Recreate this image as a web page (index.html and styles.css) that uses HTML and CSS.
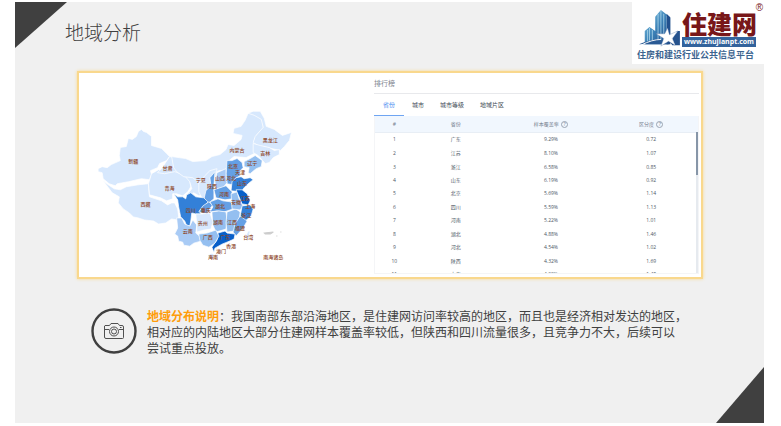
FILE: index.html
```html
<!DOCTYPE html>
<html lang="zh-CN">
<head>
<meta charset="utf-8">
<title>地域分析</title>
<link rel="stylesheet" href="styles.css">
</head>
<body>
<main class="slide">
  <header class="top">
    <h1>地域分析</h1>
    <div class="logo">
      <div class="logo-main">
        <svg class="logo-mark" viewBox="0 0 44 40" aria-hidden="true">
          <defs>
            <linearGradient id="tower" x1="0" y1="0" x2="1" y2="1">
              <stop offset="0" stop-color="#8fd0ea"/><stop offset="0.5" stop-color="#3d83b8"/><stop offset="1" stop-color="#1b4482"/>
            </linearGradient>
          </defs>
          <path d="M7 36V22l5-4 6 4v14zM18 36V7l6-7 9 7v29z" fill="url(#tower)"/>
          <path d="M24 0v36M21 4v32M27 4v32M30 6v30M12 19v17M10 21v15M15 21v15" stroke="#c5e8f5" stroke-width=".7" fill="none"/>
          <path d="M34 8v28h-4V4z" fill="#22508d"/>
          <path d="M1 36q15-6 23-5l8 5z" fill="#2a5a94"/>
          <path d="M3 37q12-6 21-6" stroke="#fff" fill="none"/>
          <path d="M41 22l-5 8 3 7-6-4 3 4h8V22z" fill="#25528d"/>
          <path d="M31 19l2 7 9-4-6 8 3 7-7-4-8 5 3-8-8-5h9z" fill="#fff" stroke="#5f7fae" stroke-width=".4"/>
        </svg>
        <div class="logo-words">
          <span class="logo-name">住建网</span>
          <span class="logo-url">www.zhujianpt.com</span>
        </div>
        <span class="logo-reg">®</span>
      </div>
      <div class="logo-tag">住房和建设行业公共信息平台</div>
    </div>
  </header>

  <section class="panel">
    <svg class="map" viewBox="80 74 292 202" role="img" aria-label="地域分布">
      <g class="land">
        <path class="c0" d="M99 169l4-2 5 1 4-3 9-4-1-5 1-8 6-1 2-8 4 1 4-3 2-5 3-2 2 2 3 1 5 4v9l10 3 5 5 3 3-3 4-7 3-2 4-7 3 1 4-2 5-8-1-13 3-11 2-2 2-6-2-6-5-1-6-4-1z"/>
        <path class="c0" d="M104 181l5 4 6 4 6 1 6-3 12-2 10-1 1 13 12 4 6 4 4-2 3 0 3 6 1 8-1 3-6-1-6 4-7 1-5-3-9-1-6-2-5-1-4-4-6-4-5-6 1-6-7-4z"/>
        <path class="c0" d="M152 174l7-4 6 1 5 1 4-2 7 1 5 4 4 6 1 6-3 5-5 4-6-2-4 0 0 5-6 2-6-3-11-3-1-11z"/>
        <path class="c0" d="M170 157l4 1 1 5 7 2 1 5 7 1 4 6 4 2 1 5 4 3 2 8-6 1-5-3-4 3-3-1 5-6-2-7-6-7-9-3-10 2-7-1 4-4z"/>
        <path class="c0" d="M172 157l14 2 7 3 13-1 6-4 8-2 6-5 2-5 6 1 7-6 1-4-9-2 1-5 7-2 4-6 3-7 5-1 8 4 2 5 0 7-6 6-3 6 4 7-4 6-8 4-12-1-5 4-2 10-8 0-6 4-4 9-7 2-4-4-5-4-9-1-7-5-3-4z"/>
        <path class="c0" d="M205 176l5-5 7-2-1 8-5 5-2 12-6 6-4-8 0-8z"/>
        <path class="c0" d="M248 114l5-2h7l4 7 2 8 8 3 8 6 9-3-2 8-5 6-4 4-9-2-8-2-4 0-6-4 2-6 8-9-2-8-7-4z"/>
        <path class="c0" d="M253 144l7 2 9 2 5 3 5-1 0 5-6 3-4 5-4 1-7-8-5-3z"/>
        <path class="c2" d="M244 162l6-3 5-3 7 5-1 6-5 2-6 5-2-1 1-5-5-1z"/>
        <path class="c3" d="M227 161l5 0 5-2 5 4 1 5-3 3 0 5-5 3-2 6-6-1-1-10z"/>
        <path class="c4" d="M232 182l4-4 5-1 3 2 6-1 3 2-5 4-4 4-3 4-10-1z"/>
        <path class="c1" d="M217 173l9-4 0 8 1 6-4 5-7 1-1-7z"/>
        <path class="c3" d="M210 178l5-6-1 14 0 13-5 4-6 1 3-13 5-5z"/>
        <path class="c3" d="M214 190l12-4 6 6 0 7-7 1-9-2z"/>
        <path class="c4" d="M174 194l4 3 5 0 3 2 1-4 4-2 5 4 8 1 4 4-4 6-4 2 1 4-5 0-4-1-1 8-1 5-3 0-2-5-4-4-2-10-1-7z"/>
        <path class="c1" d="M177 218l5 0 3 6 5 2 3-6 4 5-1 8 5 4 0 4-7 2-4 3-6-1-1-3-4-1-1-5-3-2 3-6z"/>
        <path class="c3" d="M203 206l6-4 4 3-4 5-2 4-8-2z"/>
        <path class="c0" d="M196 214l6 0 8-1 3 9-2 7-7 1-7 2 0-8z"/>
        <path class="c3" d="M210 202l8-3 5 2 8 1 2 7-9 3-7-1-7 1 3-5z"/>
        <path class="c2" d="M212 212l7-1 7 1 1 8-1 9-10 3-3-7z"/>
        <path class="c2" d="M227 212l9-3 4 3-1 9-5 10-7 1-1-9z"/>
        <path class="c2" d="M231 194l6-2 2 7 4 7-3 4-8-1z"/>
        <path class="c5" d="M236 190l6 0 5 4 3 7-2 4-6-1-3-7z"/>
        <path class="c4" d="M242 206l8-1 3 4-2 7-6 5-5-4z"/>
        <path class="c3" d="M240 216l7 5-4 7-7 8-3-4 2-8z"/>
        <path class="c5" d="M218 233l7-2 2 2 8 1-1 5-7 3-5 2-7 4-1 4-2-5 5-7z"/>
        <path class="c2" d="M199 234l8-1 9-3 3 6-4 7-6 4-6-2-3-5z"/>
        <path class="c0" d="M208 255l4-2 3 2-3 4-3-1zM246 235l2-4 2 0-1 6-2 4z"/>
      </g>
      <path class="islands" d="M264 233l9-1-3 2h-5zM280 232h1M276 236h1"/>
      <g class="names">
        <text x="134" y="163">新疆</text><text x="168" y="170">甘肃</text><text x="170" y="190">青海</text><text x="146" y="206">西藏</text>
        <text x="237" y="152">内蒙古</text><text x="270" y="143">黑龙江</text><text x="265" y="155">吉林</text><text x="252" y="165">辽宁</text>
        <text x="233" y="168">北京</text><text x="240" y="174">天津</text><text x="231" y="180">河北</text><text x="220" y="180">山西</text>
        <text x="201" y="182">宁夏</text><text x="242" y="185">山东</text><text x="212" y="188">陕西</text><text x="224" y="196">河南</text>
        <text x="245" y="200">江苏</text><text x="236" y="204">安徽</text><text x="250" y="208">上海</text><text x="220" y="208">湖北</text>
        <text x="191" y="212">四川</text><text x="206" y="212">重庆</text><text x="246" y="217">浙江</text><text x="218" y="224">湖南</text>
        <text x="232" y="224">江西</text><text x="203" y="225">贵州</text><text x="240" y="230">福建</text><text x="188" y="233">云南</text>
        <text x="208" y="239">广西</text><text x="225" y="239">广东</text><text x="248" y="239">台湾</text><text x="231" y="248">香港</text>
        <text x="221" y="253">澳门</text><text x="213" y="259">海南</text><text x="273" y="259">南海诸岛</text>
      </g>
    </svg>

    <div class="ranking">
      <h2>排行榜</h2>
      <nav class="tabs">
        <button type="button" class="active">省份</button>
        <button type="button">城市</button>
        <button type="button">城市等级</button>
        <button type="button">地域片区</button>
      </nav>
      <div class="list">
        <table>
          <colgroup><col class="w-rank"><col class="w-area"><col class="w-cover"><col class="w-diff"></colgroup>
          <thead>
            <tr><th>#</th><th>省份</th><th>样本覆盖率 <span class="help">?</span></th><th>区分度 <span class="help">?</span></th></tr>
          </thead>
          <tbody>
            <tr><td>1</td><td>广东</td><td>9.29%</td><td>0.72</td></tr>
            <tr><td>2</td><td>江苏</td><td>8.10%</td><td>1.07</td></tr>
            <tr><td>3</td><td>浙江</td><td>6.58%</td><td>0.85</td></tr>
            <tr><td>4</td><td>山东</td><td>6.19%</td><td>0.92</td></tr>
            <tr><td>5</td><td>北京</td><td>5.69%</td><td>1.14</td></tr>
            <tr><td>6</td><td>四川</td><td>5.59%</td><td>1.13</td></tr>
            <tr><td>7</td><td>河南</td><td>5.22%</td><td>1.01</td></tr>
            <tr><td>8</td><td>湖北</td><td>4.88%</td><td>1.46</td></tr>
            <tr><td>9</td><td>河北</td><td>4.54%</td><td>1.02</td></tr>
            <tr><td>10</td><td>陕西</td><td>4.32%</td><td>1.69</td></tr>
            <tr><td>11</td><td>上海</td><td>4.20%</td><td>1.48</td></tr>
          </tbody>
        </table>
        <div class="track"><div class="thumb"></div></div>
      </div>
    </div>
  </section>

  <section class="note">
    <svg class="camera" viewBox="0 0 46 46" aria-hidden="true">
      <circle cx="23" cy="23" r="21.5" fill="none" stroke="#404040" stroke-width="2.4"/>
      <g fill="none" stroke="#505050" stroke-width="1" stroke-linejoin="round">
        <path d="M14 17.500h4.500l1.500-2h7l1.500 2H31q1.500 0 1.500 1.500v10.500q0 1-1 1H15q-1.500 0-1.500-1.500V18zM13.500 21.500H18M28 21.500h4.500"/>
        <circle cx="23" cy="23.500" r="4.500"/>
        <circle cx="23" cy="23.500" r="2.500"/>
        <path d="M29 19.500h1.500"/>
      </g>
    </svg>
    <p><strong>地域分布说明</strong>：我国南部东部沿海地区，是住建网访问率较高的地区，而且也是经济相对发达的地区，<br>相对应的内陆地区大部分住建网样本覆盖率较低，但陕西和四川流量很多，且竞争力不大，后续可以<br>尝试重点投放。</p>
  </section>
</main>
</body>
</html>
```
FILE: styles.css
```css
* { box-sizing: border-box; }

body {
  margin: 0;
  padding: 2px 17px 3px 15px;
  min-height: 100vh;
  display: flex;
  background: #fff;
  color: #404040;
  font-family: "Noto Sans CJK SC", sans-serif;
}

.slide {
  flex: 1;
  min-width: 0;
  position: relative;
  background: #f0f0f0;
}

.slide::before,
.slide::after {
  content: "";
  position: absolute;
  background: #404040;
}

.slide::before {
  left: 0;
  top: 0;
  width: 52px;
  height: 46px;
  clip-path: polygon(0 0, 100% 0, 0 100%);
}

.slide::after {
  right: 0;
  bottom: 0;
  width: 48px;
  height: 56px;
  clip-path: polygon(100% 0, 100% 100%, 0 100%);
}

.top {
  display: flex;
  justify-content: space-between;
  align-items: flex-start;
  padding-left: 50px;
}

h1 {
  margin: 16px 0 0;
  font-size: 19px;
  line-height: 28px;
  font-weight: 300;
}

.logo {
  width: 132px;
  height: 62px;
  padding: 8px 0 0 5px;
  background: #fff;
}

.logo-main {
  position: relative;
  display: flex;
  gap: 1px;
}

.logo-mark { width: 44px; height: 38px; }

.logo-words {
  display: flex;
  flex-direction: column;
  width: 74px;
}

.logo-name {
  font-size: 25px;
  line-height: 27px;
  font-weight: 900;
  color: #781719;
  white-space: nowrap;
}

.logo-url {
  font-family: "Open Sans", sans-serif;
  font-size: 7px;
  line-height: 10px;
  font-weight: 700;
  text-align: center;
  color: #fff;
  background: #33639c;
  white-space: nowrap;
}

.logo-reg {
  position: absolute;
  right: 1px;
  top: -8px;
  font-family: "Liberation Sans", sans-serif;
  font-size: 10px;
  line-height: 12px;
  color: #781719;
}

.logo-tag {
  font-size: 9px;
  line-height: 13px;
  font-weight: 700;
  color: #3c648f;
  white-space: nowrap;
}

.panel {
  display: grid;
  grid-template-columns: 294px minmax(0, 1fr);
  grid-template-rows: minmax(0, 1fr);
  margin: 7px 61px 0 62px;
  height: 208px;
  border: 2px solid #f9d88d;
  background: #fff;
  box-shadow: 0 0 3px #f9d88d;
}

.map { width: 100%; display: block; }
.land { stroke: #fff; stroke-width: .7; stroke-linejoin: round; }
.c0 { fill: #d7e8fd; }
.c1 { fill: #a9cbf5; }
.c2 { fill: #94bff0; }
.c3 { fill: #64a0e5; }
.c4 { fill: #3380d8; }
.c5 { fill: #085fc9; }
.islands { fill: #ccc; stroke: #ccc; stroke-width: 1; }
.names { font-size: 5px; font-weight: 500; fill: #8c4526; text-anchor: middle; }

.ranking {
  display: flex;
  flex-direction: column;
  min-width: 0;
  padding: 0 2px 3px 1px;
}

h2 {
  margin: 0;
  padding-top: 4px;
  height: 21px;
  font-size: 7px;
  line-height: 12px;
  font-weight: 400;
  color: #7c828c;
  border-bottom: 1px solid #e8e9ec;
}

.tabs {
  flex: none;
  display: flex;
  height: 22px;
}

.tabs button {
  padding: 0 8px;
  border: 0;
  border-bottom: 1px solid transparent;
  background: none;
  color: #3f4c55;
  font: inherit;
  font-size: 6px;
}

.tabs .active {
  padding: 0 9px;
  color: #4a8cf0;
  border-bottom-color: #6fa5f2;
}

.list {
  flex: 1;
  min-height: 0;
  position: relative;
  overflow: hidden;
  border: 1px solid #f4f5f7;
  border-top: 0;
}

table {
  width: 100%;
  height: 165px;
  table-layout: fixed;
  border-collapse: collapse;
  font-family: "Open Sans", "Noto Sans CJK SC", sans-serif;
  font-size: 5px;
  line-height: 8px;
  text-align: center;
  color: #4c5764;
}

.w-rank { width: 12%; }
.w-area { width: 26%; }
.w-cover { width: 33%; }
.w-diff { width: 29%; }

th, td { padding: 0; }

th {
  height: 16px;
  font-weight: 400;
  color: #76808f;
  background: #f1f7fe;
  border-bottom: 1px solid #e8eef5;
}

.help {
  display: inline-block;
  width: 7px;
  height: 7px;
  margin-left: 1px;
  border: 1px solid #9aa4b2;
  border-radius: 50%;
  line-height: 5px;
}

.track {
  position: absolute;
  right: 0;
  top: 16px;
  bottom: 0;
  width: 2px;
  background: #e6eaef;
}

.thumb {
  height: 43px;
  background: #8796a8;
}

.note {
  display: flex;
  align-items: flex-start;
  gap: 10px;
  padding: 29px 0 0 76px;
}

.camera {
  flex: none;
  width: 46px;
  height: 46px;
}

.note p {
  margin: 0;
  font-size: 12px;
  line-height: 16px;
  white-space: nowrap;
}

.note strong { color: #ff9d0a; }
```
